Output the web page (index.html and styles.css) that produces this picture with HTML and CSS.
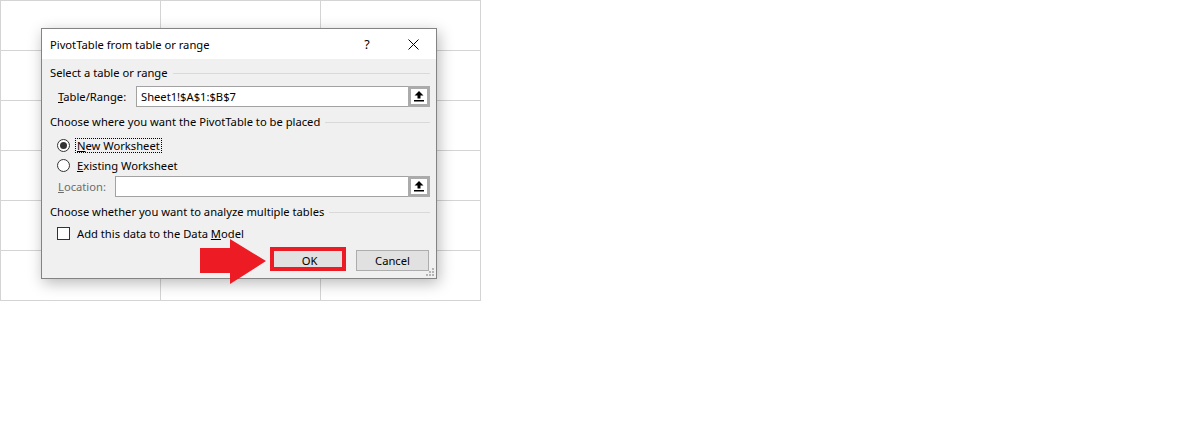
FILE: index.html
```html
<!DOCTYPE html>
<html lang="en">
<head>
    <meta charset="UTF-8">
    <title>PivotTable from table or range</title>
    <link rel="stylesheet" href="styles.css">
</head>
<body>
    <div class="sheet">
        <div class="cell"></div><div class="cell"></div><div class="cell"></div>
        <div class="cell"></div><div class="cell"></div><div class="cell"></div>
        <div class="cell"></div><div class="cell"></div><div class="cell"></div>
        <div class="cell"></div><div class="cell"></div><div class="cell"></div>
        <div class="cell"></div><div class="cell"></div><div class="cell"></div>
        <div class="cell"></div><div class="cell"></div><div class="cell"></div>
    </div>

    <div class="dialog">
        <div class="titlebar">
            <span class="title">PivotTable from table or range</span>
            <span class="title-btn help">?</span>
            <span class="title-btn close">
                <svg width="11" height="11" viewBox="0 0 11 11"><path d="M0.5 0.5 L10.5 10.5 M10.5 0.5 L0.5 10.5" stroke="#000" stroke-width="1" fill="none"/></svg>
            </span>
        </div>
        <div class="body">
            <div class="group-head"><span>Select a table or range</span><i class="rule"></i></div>
            <div class="field-row">
                <label class="field-label table-label"><u>T</u>able/Range:</label>
                <div class="textbox">
                    <span class="value">Sheet1!$A$1:$B$7</span>
                    <span class="collapse">
                        <svg width="10" height="11" viewBox="0 0 10 11"><path d="M5 0 L9.5 4.5 L6.5 4.5 L6.5 7.5 L3.5 7.5 L3.5 4.5 L0.5 4.5 Z" fill="#000"/><rect x="0" y="9" width="10" height="1.5" fill="#000"/></svg>
                    </span>
                </div>
            </div>

            <div class="group-head second"><span>Choose where you want the PivotTable to be placed</span><i class="rule"></i></div>
            <div class="option-row first">
                <span class="radio checked"></span>
                <span class="option-label focused"><u>N</u>ew Worksheet</span>
            </div>
            <div class="option-row">
                <span class="radio"></span>
                <span class="option-label"><u>E</u>xisting Worksheet</span>
            </div>
            <div class="field-row location">
                <label class="field-label location-label disabled"><u>L</u>ocation:</label>
                <div class="textbox">
                    <span class="value"></span>
                    <span class="collapse">
                        <svg width="10" height="11" viewBox="0 0 10 11"><path d="M5 0 L9.5 4.5 L6.5 4.5 L6.5 7.5 L3.5 7.5 L3.5 4.5 L0.5 4.5 Z" fill="#000"/><rect x="0" y="9" width="10" height="1.5" fill="#000"/></svg>
                    </span>
                </div>
            </div>

            <div class="group-head third"><span>Choose whether you want to analyze multiple tables</span><i class="rule"></i></div>
            <div class="option-row check-row">
                <span class="checkbox"></span>
                <span class="option-label">Add this data to the Data <u>M</u>odel</span>
            </div>

            <div class="buttons">
                <button class="btn ok">OK</button>
                <button class="btn">Cancel</button>
            </div>
        </div>
        <svg class="grip" width="8" height="8" viewBox="0 0 8 8">
            <rect x="6" y="0" width="2" height="2" fill="#b4b4b4"/>
            <rect x="3" y="3" width="2" height="2" fill="#b4b4b4"/>
            <rect x="6" y="3" width="2" height="2" fill="#b4b4b4"/>
            <rect x="0" y="6" width="2" height="2" fill="#b4b4b4"/>
            <rect x="3" y="6" width="2" height="2" fill="#b4b4b4"/>
            <rect x="6" y="6" width="2" height="2" fill="#b4b4b4"/>
        </svg>
    </div>

    <!-- annotation drawn on top of the screenshot -->
    <div class="highlight"></div>
    <svg class="pointer" width="67" height="46" viewBox="0 0 67 46">
        <path d="M0 9 L30 9 L30 0 L66 22 L30 45 L30 34 L0 34 Z" fill="#ed1c24"/>
    </svg>
</body>
</html>
```

FILE: styles.css
```css
body {
    margin: 0;
    padding: 0;
    background: #fff;
    font-family: "Noto Sans", "Open Sans", sans-serif;
    font-size: 11.2px;
    color: #000;
}
.sheet {
    display: grid;
    grid-template-columns: repeat(3, 160px);
    grid-auto-rows: 50px;
    width: 480px;
    border-top: 1px solid #d4d4d4;
    border-left: 1px solid #d4d4d4;
}
.cell {
    border-right: 1px solid #d4d4d4;
    border-bottom: 1px solid #d4d4d4;
    box-sizing: border-box;
}

.dialog {
    position: absolute;
    left: 41px;
    top: 28px;
    width: 394px;
    height: 249px;
    border: 1px solid #838383;
    background: #f0f0f0;
    box-shadow: 2px 4px 14px rgba(0, 0, 0, 0.28);
    display: flex;
    flex-direction: column;
}
.titlebar {
    height: 30px;
    background: #fff;
    display: flex;
    align-items: center;
}
.title {
    flex: 1;
    padding-left: 8px;
}
.title-btn {
    width: 46px;
    height: 30px;
    display: flex;
    align-items: center;
    justify-content: center;
}
.help {
    font-size: 12.5px;
}
.body {
    flex: 1;
    display: flex;
    flex-direction: column;
    padding: 5px 6px 0 8px;
    position: relative;
}
.group-head {
    height: 18px;
    display: flex;
    align-items: center;
    gap: 5px;
    line-height: 18px;
    white-space: nowrap;
}
.group-head .rule {
    flex: 1;
    height: 1px;
    background: #d9d9d9;
}
.group-head.second {
    margin-top: 6px;
}
.group-head.third {
    margin-top: 6px;
}
.field-row {
    display: flex;
    align-items: center;
    height: 21px;
    margin-top: 4px;
    padding-left: 8px;
}
.field-row.location {
    margin-top: 3px;
}
.field-label {
    white-space: nowrap;
}
.table-label {
    width: 78px;
}
.location-label {
    width: 57px;
}
.disabled {
    color: #6d6d6d;
}
.textbox {
    flex: 1;
    height: 21px;
    box-sizing: border-box;
    border: 1px solid #a2a2a2;
    background: #fff;
    display: flex;
    align-items: center;
}
.textbox .value {
    flex: 1;
    padding-left: 4px;
}
.collapse {
    width: 22px;
    height: 21px;
    margin: -1px -1px -1px 0;
    box-sizing: border-box;
    border: 3px solid #ababab;
    background: #fff;
    display: flex;
    align-items: center;
    justify-content: center;
}
.option-row {
    display: flex;
    align-items: center;
    height: 16px;
    margin-top: 4px;
    padding-left: 7px;
    gap: 7px;
}
.option-row.first {
    margin-top: 6px;
}
.radio {
    width: 13px;
    height: 13px;
    box-sizing: border-box;
    border: 1px solid #333;
    border-radius: 50%;
    background: #fff;
    display: flex;
    align-items: center;
    justify-content: center;
}
.radio.checked::after {
    content: "";
    width: 7px;
    height: 7px;
    border-radius: 50%;
    background: #333;
}
.option-label {
    white-space: nowrap;
    line-height: 13px;
}
.option-label.focused {
    outline: 1px dotted #000;
    outline-offset: 0;
    padding: 0 1px;
    margin-left: -1px;
}
.checkbox {
    width: 13px;
    height: 13px;
    box-sizing: border-box;
    border: 1px solid #333;
    background: #fff;
}
.check-row {
    margin-top: 4px;
}
.buttons {
    display: flex;
    justify-content: flex-end;
    gap: 10px;
    margin-top: 9px;
    margin-right: 1px;
}
.btn {
    width: 73px;
    height: 21px;
    box-sizing: border-box;
    border: 1px solid #adadad;
    background: #e1e1e1;
    font-family: inherit;
    font-size: 11.2px;
    padding: 0;
    color: #000;
}
.grip {
    position: absolute;
    right: 2px;
    bottom: 2px;
}

.highlight {
    position: absolute;
    left: 270px;
    top: 247px;
    width: 68px;
    height: 16px;
    border: 4px solid #ed1c24;
}
.pointer {
    position: absolute;
    left: 200px;
    top: 239px;
}
```
